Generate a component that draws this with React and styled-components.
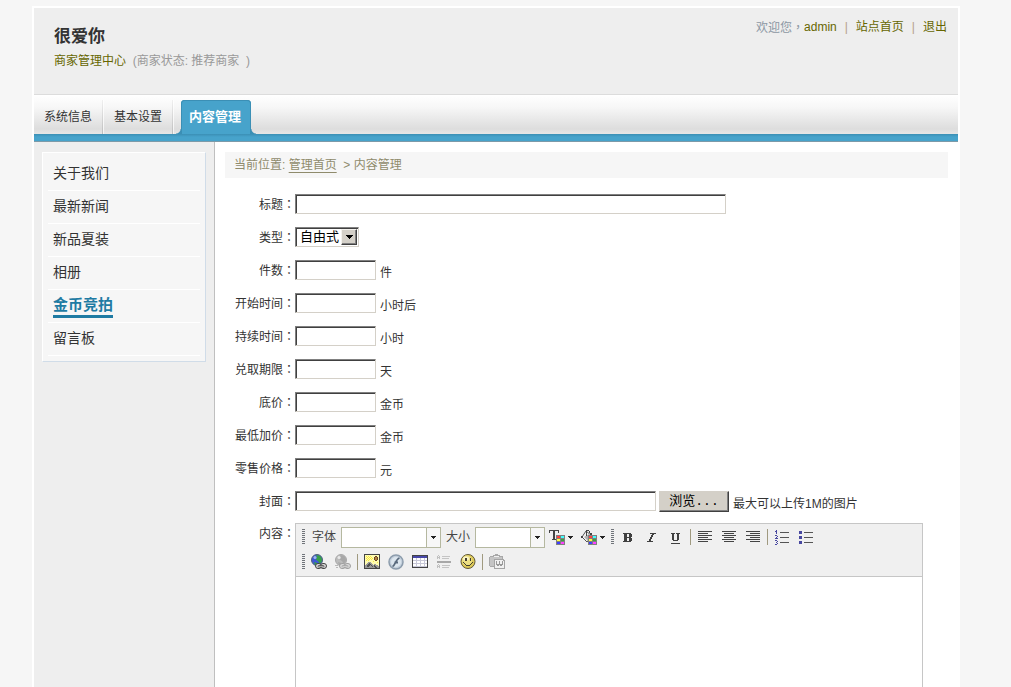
import { useState } from 'react'
import styled, { createGlobalStyle, css } from 'styled-components'

const Colors = {
    BLUE: '#47a3cb',
    BLUE_DARK: '#3b8fb5',
    LINK: '#1f7ba3',
    OLIVE: '#666600',
    TEXT: '#333333',
    GREY: '#eeeeee',
    FACE: '#d4d0c8',
    WHITE: '#ffffff',
}

const GlobalStyle = createGlobalStyle`
  * {
    box-sizing: border-box;
  }

  body {
    margin: 0;
    background: #f6f6f6;
    color: ${Colors.TEXT};
    font: 12px/20px "Liberation Sans", "Noto Sans CJK SC", sans-serif;
  }

  input, select, button, textarea {
    margin: 0;
    padding: 0;
    border: none;
    border-radius: 0;
    font: inherit;
    color: inherit;
  }

  a {
    color: inherit;
    text-decoration: none;
  }
`

const Page = styled.div`
  display: flex;
  flex-direction: column;
  min-height: calc(100vh - 6px);
  margin: 6px 51px 0 32px;
  border: 2px solid ${Colors.WHITE};
  border-bottom: none;
`

// full width punctuation that sits in the middle of its cell
const Mark = styled.span`
  font-family: "Noto Sans CJK TC", sans-serif;
`

/* header */

const Header = styled.header`
  display: flex;
  justify-content: space-between;
  height: 87px;
  padding: 9px 11px 0 20px;
  background: ${Colors.GREY};
  border-bottom: 1px solid #dcdcdc;
`

const ShopName = styled.h1`
  margin: 10px 0 4px;
  font-size: 17px;
  line-height: 20px;
`

const ShopInfo = styled.p`
  margin: 0;
  color: #999999;
  white-space: pre;

  a {
    color: ${Colors.OLIVE};
  }
`

const UserLinks = styled.div`
  display: flex;
  align-items: flex-start;
  color: #8c97a3;

  a {
    color: ${Colors.OLIVE};
  }
`

const Pipe = styled.span`
  padding: 0 8px;
  color: #b5a08c;
`

/* tabs */

const Nav = styled.nav`
  display: flex;
  align-items: flex-end;
  height: 47px;
  background:
    linear-gradient(${Colors.BLUE_DARK}, ${Colors.BLUE} 3px) 0 39px / 100% 7px no-repeat,
    linear-gradient(#7d9aa8, #7d9aa8) 0 46px / 100% 1px no-repeat,
    linear-gradient(#ffffff, #f7f7f7 12px, #dddddd 34px, #e6e6e6 39px);
  padding-bottom: 8px;
`

const Tab = styled.a`
  width: 70px;
  padding-left: 10px;
  line-height: 34px;
  background:
    linear-gradient(#f0f0f0, #bdbdbd) 68px 0 / 1px 100% no-repeat,
    linear-gradient(#ffffff, #f3f3f3) 69px 0 / 1px 100% no-repeat;

  ${({ $active }) => $active && css`
    position: relative;
    margin-left: 7px;
    padding-left: 8px;
    border-radius: 4px 4px 0 0;
    background: ${Colors.BLUE};
    box-shadow: inset 0 1px 0 ${Colors.BLUE_DARK}, inset 1px 0 0 ${Colors.BLUE_DARK}, inset -1px 0 0 ${Colors.BLUE_DARK};
    color: ${Colors.WHITE};
    font-size: 13px;
    font-weight: bold;

    &::before, &::after {
      content: "";
      position: absolute;
      bottom: 0;
      width: 5px;
      height: 5px;
    }

    &::before {
      right: 100%;
      background: radial-gradient(circle at 0 0, transparent 4px, ${Colors.BLUE_DARK} 5px);
    }

    &::after {
      left: 100%;
      background: radial-gradient(circle at 100% 0, transparent 4px, ${Colors.BLUE_DARK} 5px);
    }
  `}
`

/* columns */

const Columns = styled.div`
  display: flex;
  flex: 1;
`

const Sidebar = styled.aside`
  flex: none;
  width: 181px;
  padding: 10px 8px;
  background: ${Colors.GREY};
  border-right: 1px solid #bfbfbf;
`

const Menu = styled.ul`
  margin: 0;
  padding: 5px;
  list-style: none;
  background: #f6f6f6;
  border: 1px solid;
  border-color: #ffffff #d0dce8 #d0dce8 #ffffff;
`

const MenuItem = styled.li`
  height: 33px;
  padding: 5px;
  border-bottom: 1px solid ${Colors.WHITE};
  font-size: 14px;
`

const MenuLink = styled.a`
  display: inline-block;
  line-height: 20px;

  ${({ $active }) => $active && css`
    color: ${Colors.LINK};
    border-bottom: 3px solid ${Colors.LINK};
    font-size: 15px;
    font-weight: bold;
  `}
`

const Main = styled.main`
  display: flex;
  flex-direction: column;
  flex: 1;
  min-width: 0;
  padding: 10px 10px 0;
  background: ${Colors.WHITE};
`

const Breadcrumb = styled.div`
  padding: 3px 9px;
  background: #f6f6f6;
  color: #8f8b6c;
  white-space: pre;

  a {
    text-decoration: underline;
    text-underline-offset: 3px;
  }
`

/* form */

const Form = styled.form`
  display: flex;
  flex-direction: column;
  flex: 1;
  padding-top: 10px;
`

const Row = styled.div`
  display: flex;
  height: 33px;
  padding: 6px 0 7px;
`

const Label = styled.label`
  flex: none;
  width: 70px;
  line-height: 20px;
  text-align: right;
  white-space: nowrap;
`

const sunken = css`
  height: 20px;
  background: ${Colors.WHITE};
  border: 1px solid;
  border-color: #808080 ${Colors.FACE} ${Colors.FACE} #808080;
  box-shadow: inset 1px 1px 0 #404040;
`

const Input = styled.input`
  ${sunken}
  width: ${({ $width }) => $width || 81}px;
  padding: 0 4px;
`

const Unit = styled.span`
  padding: 3px 0 0 4px;
  line-height: 20px;
`

const SelectBox = styled.div`
  ${sunken}
  display: flex;
  padding: 1px;
  width: 64px;
`

const Select = styled.select`
  flex: 1;
  min-width: 0;
  padding-left: 3px;
  appearance: none;
  background: transparent;
  color: #000000;
  font-size: 13px;
  line-height: 16px;
`

const SelectArrow = styled.span`
  display: flex;
  align-items: center;
  justify-content: center;
  width: 16px;
  background: ${Colors.FACE};
  border: 1px solid;
  border-color: #f4f2ee #404040 #404040 #f4f2ee;
  box-shadow: inset -1px -1px 0 #808080;
  pointer-events: none;
`

const BrowseButton = styled.button`
  width: 70px;
  height: 21px;
  margin-left: 3px;
  background: ${Colors.FACE};
  border: 1px solid;
  border-color: ${Colors.FACE} #404040 #404040 ${Colors.FACE};
  box-shadow: inset -1px -1px 0 #808080;
  color: #000000;
  font: 13px/16px "Liberation Mono", "Noto Sans CJK SC", monospace;
`

/* editor */

const EditorRow = styled.div`
  display: flex;
  flex: 1;
  padding: 5px 25px 0 0;
`

const Editor = styled.div`
  display: flex;
  flex-direction: column;
  flex: 1;
  min-width: 0;
  border: 1px solid #c6c6c6;
  border-bottom: none;
`

const Toolbar = styled.div`
  display: flex;
  flex-direction: column;
  gap: 1px;
  padding: 1px 4px 2px;
  background: #f0f0f0;
  border-bottom: 1px solid #c6c6c6;
`

const ToolRow = styled.div`
  display: flex;
  align-items: center;
  height: 24px;
`

const Handle = styled.span`
  width: 3px;
  height: 16px;
  margin: 0 2px;
  background: repeating-linear-gradient(#70747a 0 1px, transparent 1px 2px);
`

const Separator = styled.span`
  width: 1px;
  height: 16px;
  margin: 0 2px;
  background: #a09a80;
`

const ToolLabel = styled.label`
  padding: 0 5px;
  color: #444444;
`

const Combo = styled.div`
  display: flex;
  width: ${({ $width }) => $width}px;
  height: 21px;
  border: 1px solid #b5b8a0;

  input {
    flex: 1;
    min-width: 0;
    padding: 0 3px;
    background: ${Colors.WHITE};
  }

  button {
    display: flex;
    align-items: center;
    justify-content: center;
    width: 14px;
    border-left: 1px solid #b5b8a0;
    background: #f7f7f7;
  }
`

const ToolButton = styled.button`
  display: flex;
  align-items: center;
  justify-content: center;
  gap: 3px;
  width: ${({ $wide }) => ($wide ? 32 : 24)}px;
  height: 22px;
  background: transparent;

  svg {
    flex: none;
  }
`

const EditArea = styled.textarea`
  flex: 1;
  min-height: 100px;
  padding: 8px;
  resize: none;
  outline: none;
`

/* icons */

function Icon({ children, size = 16 }) {
    return (
        <svg width={size} height={size} viewBox="0 0 16 16" shapeRendering="crispEdges" aria-hidden="true">
            {children}
        </svg>
    )
}

function Caret({ wide }) {
    return wide ? (
        <svg width="7" height="4" viewBox="0 0 7 4" shapeRendering="crispEdges" aria-hidden="true">
            <path d="M0 0h7v1H0zM1 1h5v1H1zM2 2h3v1H2zM3 3h1v1H3z" fill="#000" />
        </svg>
    ) : (
        <svg width="5" height="3" viewBox="0 0 5 3" shapeRendering="crispEdges" aria-hidden="true">
            <path d="M0 0h5v1H0zM1 1h3v1H1zM2 2h1v1H2z" fill="#222" />
        </svg>
    )
}

function Palette() {
    return (
        <>
            <path d="M7 6h9v10H7z" fill="#808080" />
            <path d="M8 7h3v2H8z" fill="#ff4040" />
            <path d="M12 7h3v2h-3z" fill="#40ffff" />
            <path d="M8 10h3v2H8z" fill="#ffff40" />
            <path d="M12 10h3v2h-3z" fill="#40a040" />
            <path d="M8 13h3v2H8z" fill="#4040ff" />
            <path d="M12 13h3v2h-3z" fill="#ff40ff" />
        </>
    )
}

const TextColorIcon = () => (
    <Icon>
        <path d="M0 1h10v3H9V2H6v8h1v1H3v-1h1V2H1v2H0z" fill="#444" />
        <Palette />
    </Icon>
)

const BackColorIcon = () => (
    <Icon>
        <path d="M5 2l6 5-5 6-5-5z" fill="#f4f4f4" stroke="#555" shapeRendering="auto" />
        <path d="M3 8l4 4 3-4-2-3z" fill="#b0b0b0" shapeRendering="auto" />
        <path d="M5 1h1v6H5zM6 1h2v1H6zM8 2h1v2H8zM9 4h2v3H9zM0 7h2v2H0z" fill="#444" />
        <Palette />
    </Icon>
)

const BoldIcon = () => (
    <Icon>
        <path d="M3 4h8v1h1v3h-1v1h1v3h-1v1H3v-1h1V5H3zM7 5v3h2V5zM7 9v3h2V9z" fill="#404040" fillRule="evenodd" />
    </Icon>
)

const ItalicIcon = () => (
    <Icon>
        <path d="M6 4h6v1h-2v1H9v2H8v2H7v2h2v1H3v-1h2v-2h1V8h1V6h1V5H6z" fill="#404040" />
    </Icon>
)

const UnderlineIcon = () => (
    <Icon>
        <path d="M3 4h4v1H6v6h3V5H8V4h4v1h-1v6h-1v1H5v-1H4V5H3zM3 14h9v1H3z" fill="#404040" />
    </Icon>
)

const AlignIcon = ({ side }) => {
    const starts = { left: [1, 1], center: [1, 3], right: [1, 5] }[side]
    return (
        <Icon>
            {[2, 4, 6, 8, 10, 12].map((y, i) => (
                <rect key={y} x={starts[i % 2]} y={y} width={i % 2 ? 10 : 14} height="1" fill="#444" />
            ))}
        </Icon>
    )
}

const OrderedIcon = () => (
    <Icon>
        <path d="M6 3h9v1H6zM6 8h9v1H6zM6 13h9v1H6z" fill="#555" />
        <path d="M2 1h1v4H2zM1 2h1v1H1zM1 6h2v1H1zM3 7h1v1H3zM2 8h1v1H2zM1 9h3v1H1zM1 11h2v1H1zM3 12h1v1H3zM2 13h1v1H2zM3 14h1v1H3zM1 15h2v1H1z" fill="#4848a0" />
    </Icon>
)

const UnorderedIcon = () => (
    <Icon>
        <path d="M6 3h9v1H6zM6 8h9v1H6zM6 13h9v1H6z" fill="#555" />
        <path d="M1 2h3v3H1zM1 7h3v3H1zM1 12h3v3H1z" fill="#4848a0" />
    </Icon>
)

const LinkIcon = ({ off }) => {
    const chain = off ? '#a0a0a0' : '#444'
    return (
        <Icon>
            <g shapeRendering="auto">
                <circle cx="6" cy="6" r="5.500" fill={off ? '#bcbcbc' : '#4058d8'} stroke={off ? '#a8a8a8' : '#506078'} strokeWidth="1" />
                <path d="M5 1.500c3-1 6 1 6 4.500 0 2-1 3-2.500 3.500L7 7 4.500 5.500 6 4z" fill={off ? '#a8a8a8' : '#38a048'} />
                <path d="M3 8l3 1 .5 2H4z" fill={off ? '#a8a8a8' : '#38a048'} />
                <circle cx="4" cy="3.500" r="1.500" fill={off ? '#e8e8e8' : '#a0b8f0'} />
                <rect x="4.500" y="9.500" width="6" height="5" rx="2.500" fill="#d8d8d8" stroke={chain} />
                <rect x="9.500" y="9.500" width="6" height="5" rx="2.500" fill="#d8d8d8" stroke={chain} />
                <rect x="7" y="11.500" width="6" height="1.500" rx=".75" fill="#e8e8e8" stroke={chain} strokeWidth=".8" />
            </g>
            {off && <path d="M0 11h3v1H0zM1 13h2v1H1z" fill="#b8b8b8" />}
        </Icon>
    )
}

const ImageIcon = () => (
    <Icon>
        <path d="M1 1h14v13H1z" fill="#fffcb0" />
        <path d="M2 2h1v1H2zM4 2h1v1H4zM6 2h1v1H6zM3 3h1v1H3zM5 3h1v1H5zM7 3h1v1H7zM2 4h1v1H2zM4 4h1v1H4zM6 4h1v1H6zM8 4h1v1H8zM3 5h1v1H3zM5 5h1v1H5zM7 5h1v1H7zM2 6h1v1H2zM4 6h1v1H4zM9 7h1v1H9zM13 8h1v1h-1z" fill="#f8e840" />
        <path d="M1 14v-3h1v-1h1V9h1V8h3v1h1v1h1v1h1v-1h2v1h2v1h1v2z" fill="#999" />
        <path d="M2 12h1v-1h1v-1h1V9h1v1h1v1h1v1h1v1H8v-1H7v-1H6v1H5v1H4zM10 11h1v1h1v1h1v1h-2v-1h-1z" fill="#505050" />
        <path d="M10 3h1V2h2v1h1v3h-1v1h-2V6h-1z" fill="#6a4424" />
        <path d="M11 3h2v3h-2z" fill="#b08040" />
        <path d="M0 0h16v15H0zM1 1v13h14V1z" fill="#444" fillRule="evenodd" />
    </Icon>
)

const FlashIcon = () => (
    <Icon>
        <g shapeRendering="auto">
            <circle cx="8" cy="8" r="7" fill="#c4d0dc" stroke="#8c9cac" strokeWidth="1.500" />
            <circle cx="8" cy="8" r="5" fill="#dce6ee" />
            <path d="M4.500 12.500c3-1 3-7.500 7-8.500M6.500 8.500h3.500" fill="none" stroke="#58697c" strokeWidth="1.800" />
        </g>
    </Icon>
)

const TableIcon = () => (
    <Icon>
        <path d="M0 1h16v13H0z" fill="#444" />
        <path d="M1 2h14v2H1z" fill="#4848a8" />
        <path d="M1 4h14v9H1z" fill="#fff" />
        <path d="M4 4h1v9H4zM8 4h1v9H8zM12 4h1v9h-1zM1 6h14v1H1zM1 9h14v1H1zM1 12h14v1H1z" fill="#c8c8d8" />
    </Icon>
)

const RuleIcon = () => (
    <Icon>
        <path d="M6 2h8v1H6zM6 4h7v1H6zM6 11h8v1H6zM6 13h7v1H6z" fill="#c4c4c4" />
        <path d="M2 1h1v1H2zM1 2h1v3H1zM3 2h1v3H3zM2 3h1v1H2zM2 10h1v1H2zM1 11h1v3H1zM3 11h1v3H3zM2 12h1v1H2z" fill="#c0c0c0" />
        <path d="M1 7h14v2H1z" fill="#a8a8a8" />
    </Icon>
)

const SmileIcon = () => (
    <Icon>
        <g shapeRendering="auto">
            <circle cx="8" cy="7.500" r="7" fill="#dcc858" stroke="#605838" />
            <circle cx="7" cy="6.500" r="5" fill="#ecdf84" />
            <ellipse cx="6" cy="4.500" rx="3" ry="2" fill="#fbf6c8" />
        </g>
        <path d="M5 4h2v3H5zM10 4h1v3h-1zM3 8h1v1H3zM12 8h1v1h-1zM4 9h1v1H4zM11 9h1v1h-1zM5 10h1v1H5zM10 10h1v1h-1zM6 11h4v1H6z" fill="#444030" />
    </Icon>
)

const PasteWordIcon = () => (
    <Icon>
        <path d="M0 3h1V2h3V1h2V0h3v1h2v1h3v3h1v8H1v-1H0z" fill="#a8a8a8" />
        <path d="M1 3h12v9H1z" fill="#c4c4c4" />
        <path d="M5 2h5v1H5z" fill="#f0f0f0" />
        <path d="M5 5h9v1h2v9H5z" fill="#a4a4a4" />
        <path d="M6 6h8v1h1v7H6z" fill="#f0f0f0" />
        <path d="M7 7h1v3h1v2H8v-1H7zM10 7h1v3h1v2h-1v-1h-1v1H9v-2h1zM13 7h1v4h-1v1h-1v-2h1z" fill="#999" />
    </Icon>
)

const tabs = ['系统信息', '基本设置', '内容管理']
const menu = ['关于我们', '最新新闻', '新品夏装', '相册', '金币竞拍', '留言板']

const fields = [
    { id: 'number', label: '件数', unit: '件' },
    { id: 'start', label: '开始时间', unit: '小时后' },
    { id: 'duration', label: '持续时间', unit: '小时' },
    { id: 'expire', label: '兑取期限', unit: '天' },
    { id: 'base', label: '底价', unit: '金币' },
    { id: 'step', label: '最低加价', unit: '金币' },
    { id: 'price', label: '零售价格', unit: '元' },
]

function FieldLabel({ htmlFor, children }) {
    return (
        <Label htmlFor={htmlFor}>
            {children}<Mark>：</Mark>
        </Label>
    )
}

function ComboBox({ id, width }) {
    return (
        <Combo $width={width}>
            <input id={id} type="text" />
            <button type="button" aria-label="展开"><Caret /></button>
        </Combo>
    )
}

function ContentEditor() {
    return (
        <Editor>
            <Toolbar>
                <ToolRow>
                    <Handle />
                    <ToolLabel htmlFor="font">字体</ToolLabel>
                    <ComboBox id="font" width={100} />
                    <ToolLabel htmlFor="size">大小</ToolLabel>
                    <ComboBox id="size" width={70} />
                    <ToolButton type="button" $wide aria-label="文本颜色"><TextColorIcon /><Caret /></ToolButton>
                    <ToolButton type="button" $wide aria-label="背景颜色"><BackColorIcon /><Caret /></ToolButton>
                    <Handle />
                    <ToolButton type="button" aria-label="加粗"><BoldIcon /></ToolButton>
                    <ToolButton type="button" aria-label="倾斜"><ItalicIcon /></ToolButton>
                    <ToolButton type="button" aria-label="下划线"><UnderlineIcon /></ToolButton>
                    <Separator />
                    <ToolButton type="button" aria-label="左对齐"><AlignIcon side="left" /></ToolButton>
                    <ToolButton type="button" aria-label="居中对齐"><AlignIcon side="center" /></ToolButton>
                    <ToolButton type="button" aria-label="右对齐"><AlignIcon side="right" /></ToolButton>
                    <Separator />
                    <ToolButton type="button" aria-label="编号列表"><OrderedIcon /></ToolButton>
                    <ToolButton type="button" aria-label="项目列表"><UnorderedIcon /></ToolButton>
                </ToolRow>
                <ToolRow>
                    <Handle />
                    <ToolButton type="button" aria-label="插入超链接"><LinkIcon /></ToolButton>
                    <ToolButton type="button" aria-label="取消超链接"><LinkIcon off /></ToolButton>
                    <Separator />
                    <ToolButton type="button" aria-label="图像"><ImageIcon /></ToolButton>
                    <ToolButton type="button" aria-label="Flash"><FlashIcon /></ToolButton>
                    <ToolButton type="button" aria-label="表格"><TableIcon /></ToolButton>
                    <ToolButton type="button" aria-label="水平线"><RuleIcon /></ToolButton>
                    <ToolButton type="button" aria-label="表情符"><SmileIcon /></ToolButton>
                    <Separator />
                    <ToolButton type="button" aria-label="从 Word 粘贴"><PasteWordIcon /></ToolButton>
                </ToolRow>
            </Toolbar>
            <EditArea id="content" />
        </Editor>
    )
}

export default function App() {
    const [tab, setTab] = useState('内容管理')
    const [item, setItem] = useState('金币竞拍')

    return (
        <>
            <GlobalStyle />
            <Page>
                <Header>
                    <div>
                        <ShopName>很爱你</ShopName>
                        <ShopInfo>
                            <a href="#center">商家管理中心</a>{'  (商家状态: 推荐商家  )'}
                        </ShopInfo>
                    </div>
                    <UserLinks>
                        <span>欢迎您<Mark>，</Mark></span>
                        <a href="#admin">admin</a>
                        <Pipe>|</Pipe>
                        <a href="#home">站点首页</a>
                        <Pipe>|</Pipe>
                        <a href="#logout">退出</a>
                    </UserLinks>
                </Header>
                <Nav>
                    {tabs.map((name) => (
                        <Tab key={name} href="#tab" $active={name === tab} onClick={() => setTab(name)}>
                            {name}
                        </Tab>
                    ))}
                </Nav>
                <Columns>
                    <Sidebar>
                        <Menu>
                            {menu.map((name) => (
                                <MenuItem key={name}>
                                    <MenuLink href="#menu" $active={name === item} onClick={() => setItem(name)}>
                                        {name}
                                    </MenuLink>
                                </MenuItem>
                            ))}
                        </Menu>
                    </Sidebar>
                    <Main>
                        <Breadcrumb>
                            当前位置: <a href="#index">管理首页</a>{'  > 内容管理'}
                        </Breadcrumb>
                        <Form>
                            <Row>
                                <FieldLabel htmlFor="title">标题</FieldLabel>
                                <Input id="title" type="text" $width={431} />
                            </Row>
                            <Row>
                                <FieldLabel htmlFor="type">类型</FieldLabel>
                                <SelectBox>
                                    <Select id="type">
                                        <option>自由式</option>
                                    </Select>
                                    <SelectArrow><Caret wide /></SelectArrow>
                                </SelectBox>
                            </Row>
                            {fields.map(({ id, label, unit }) => (
                                <Row key={id}>
                                    <FieldLabel htmlFor={id}>{label}</FieldLabel>
                                    <Input id={id} type="text" />
                                    <Unit>{unit}</Unit>
                                </Row>
                            ))}
                            <Row>
                                <FieldLabel htmlFor="cover">封面</FieldLabel>
                                <Input id="cover" type="text" $width={361} />
                                <BrowseButton type="button">浏览...</BrowseButton>
                                <Unit>最大可以上传1M的图片</Unit>
                            </Row>
                            <EditorRow>
                                <FieldLabel htmlFor="content">内容</FieldLabel>
                                <ContentEditor />
                            </EditorRow>
                        </Form>
                    </Main>
                </Columns>
            </Page>
        </>
    )
}
